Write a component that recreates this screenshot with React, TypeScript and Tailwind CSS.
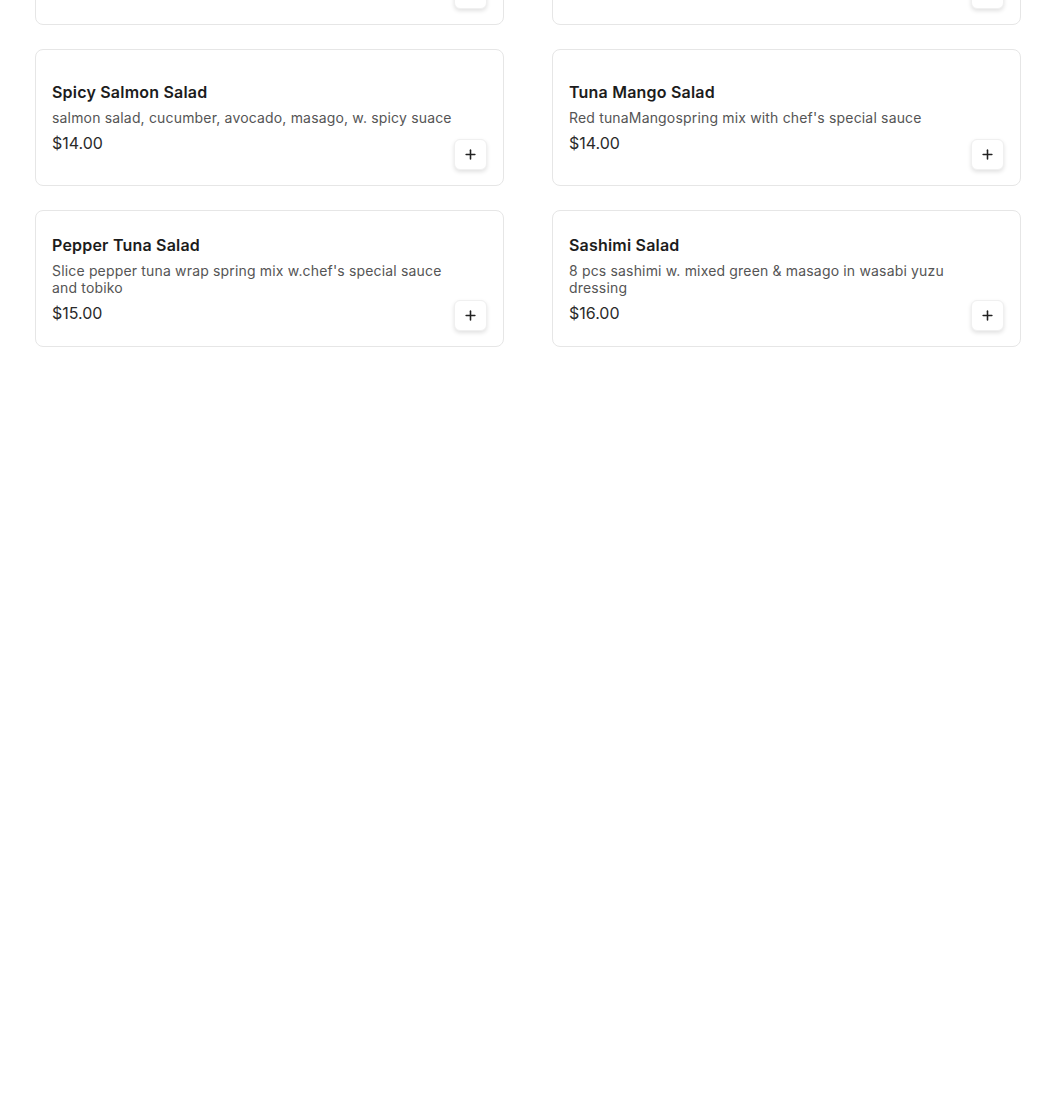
import { Plus } from "lucide-react";

type Item = {
  name: string;
  description: string;
  price: number;
};

const items: Item[] = [
  { name: "Seaweed Salad", description: "seaweed with sesame dressing", price: 6 },
  { name: "Avocado Salad", description: "avocado, spring mix w. ginger dressing", price: 8 },
  { name: "Spicy Salmon Salad", description: "salmon salad, cucumber, avocado, masago, w. spicy suace", price: 14 },
  { name: "Tuna Mango Salad", description: "Red tunaMangospring mix with chef's special sauce", price: 14 },
  { name: "Pepper Tuna Salad", description: "Slice pepper tuna wrap spring mix w.chef's special sauce and tobiko", price: 15 },
  { name: "Sashimi Salad", description: "8 pcs sashimi w. mixed green & masago in wasabi yuzu dressing", price: 16 },
];

function MenuCard({ item }: { item: Item }) {
  return (
    <div className="h-[137px] flex rounded-lg border border-[#e6e6e6] bg-white px-4 py-[15px]">
      <div className="flex-1 min-w-0 self-center">
        <h3 className="text-[16px] leading-6 font-semibold tracking-[0.2px] text-[#1c1c1c]">
          {item.name}
        </h3>
        <p className="mt-[5px] text-[14px] leading-[17px] tracking-[0.17px] text-[#555555]">
          {item.description}
        </p>
        <p className="mt-[5px] text-[16px] leading-6 text-[#2a2a2a]">
          ${item.price.toFixed(2)}
        </p>
      </div>
      <button className="self-end shrink-0 w-[33px] h-[31px] flex items-center justify-center rounded-md bg-white border border-[#f0f0f0] shadow-[0_2px_4px_rgba(0,0,0,0.12)] text-[#222]">
        <Plus size={15} strokeWidth={2.5} />
      </button>
    </div>
  );
}

export default function App() {
  return (
    <div className="min-h-screen w-full bg-white overflow-hidden font-['Inter',sans-serif]">
      <div className="-mt-[112px] pl-[35px] grid grid-cols-[469px_469px] gap-x-[48px] gap-y-6">
        {items.map((item) => (
          <MenuCard key={item.name} item={item} />
        ))}
      </div>
    </div>
  );
}
